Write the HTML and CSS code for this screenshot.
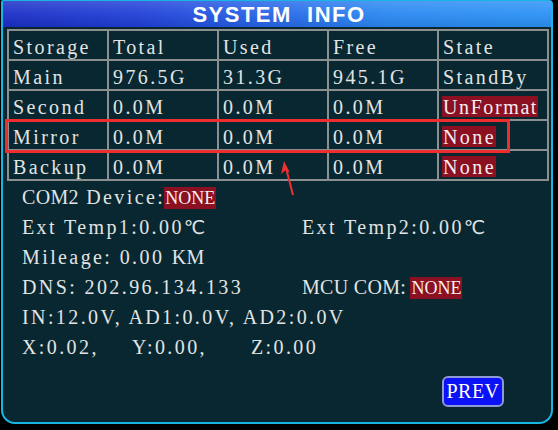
FILE: index.html
```html
<!DOCTYPE html>
<html>
<head>
<meta charset="utf-8">
<link rel="stylesheet" href="styles.css">
</head>
<body>
<div class="screen">
  <div class="title">SYSTEM&nbsp; INFO</div>
  <table class="grid">
    <tr><td>Storage</td><td>Total</td><td>Used</td><td>Free</td><td>State</td></tr>
    <tr><td>Main</td><td>976.5G</td><td>31.3G</td><td>945.1G</td><td>StandBy</td></tr>
    <tr><td>Second</td><td>0.0M</td><td>0.0M</td><td>0.0M</td><td><span class="tag wide">UnFormat</span></td></tr>
    <tr><td>Mirror</td><td>0.0M</td><td>0.0M</td><td>0.0M</td><td><span class="tag">None</span></td></tr>
    <tr><td>Backup</td><td>0.0M</td><td>0.0M</td><td>0.0M</td><td><span class="tag">None</span></td></tr>
  </table>
  <div class="info">
    <div class="line full"><span class="cap">COM2</span> Device:<span class="tag cap">NONE</span></div>
    <div class="line"><span>Ext Temp1:0.00<span class="deg">℃</span></span><span>Ext Temp2:0.00<span class="deg">℃</span></span></div>
    <div class="line full">Mileage: 0.00 <span class="cap">KM</span></div>
    <div class="line"><span>DNS: 202.96.134.133</span><span><span class="cap">MCU COM: </span><span class="tag cap">NONE</span></span></div>
    <div class="line full">IN:12.0V, AD1:0.0V, AD2:0.0V</div>
    <div class="line xyz"><span>X:0.02,</span><span>Y:0.00,</span><span>Z:0.00</span></div>
  </div>
  <div class="footer"><span class="btn">PREV</span></div>
  <div class="mark"></div>
  <svg class="arrow" width="30" height="40" viewBox="0 0 30 40">
    <path d="M18 35 L11 8" stroke="#f03030" stroke-width="2" fill="none"/>
    <path d="M9 1 L15 13 L11 10 L6 14 Z" fill="#f03030"/>
  </svg>
</div>
</body>
</html>
```
FILE: styles.css
```css
html, body {
  margin: 0;
  padding: 0;
  background: #000;
}
body {
  width: 558px;
  height: 430px;
  overflow: hidden;
}
.screen {
  position: relative;
  box-sizing: border-box;
  margin-left: 1px;
  width: 552px;
  height: 424px;
  border: 2px solid #17b6e2;
  border-top-width: 1px;
  border-radius: 2px 4px 14px 14px;
  background: #082730;
  font-family: "Liberation Serif", "Times New Roman", serif;
  font-variant-numeric: tabular-nums;
  letter-spacing: 2.4px;
  color: #e2e4e4;
}
.title {
  height: 26px;
  background:
    linear-gradient(to bottom, rgba(255,255,255,0.16) 0%, rgba(255,255,255,0.06) 45%, rgba(0,0,0,0.08) 100%),
    linear-gradient(to right, #1a2ec6 0%, #2040d8 25%, #2560e6 45%, #2a88f2 70%, #2b92f6 100%);
  color: #fff;
  font-family: "Liberation Sans", Arial, sans-serif;
  font-weight: bold;
  font-size: 22px;
  letter-spacing: 1.5px;
  line-height: 27px;
  text-align: center;
  padding-left: 4px;
}
.grid {
  margin: 2px 0 0 4px;
  border-collapse: separate;
  border-spacing: 0;
  table-layout: fixed;
  width: 542px;
  border-left: 2px solid #8b8f90;
  border-top: 2px solid #8b8f90;
}
.grid td {
  box-sizing: border-box;
  width: 110px;
  height: 30px;
  padding: 4px 0 0 4px;
  border-right: 2px solid #8b8f90;
  border-bottom: 2px solid #8b8f90;
  font-size: 20px;
  line-height: 24px;
  white-space: nowrap;
  overflow: hidden;
  vertical-align: middle;
}
.grid td:first-child {
  width: 100px;
}
.tag {
  display: inline-block;
  background: #8a1022;
  color: #f4eeee;
  line-height: 20px;
  padding: 1px 0 0 1px;
  margin-left: -1px;
}
.tag.wide {
  letter-spacing: 1.6px;
}
.cap {
  letter-spacing: 0.3px;
}
.tag.cap {
  font-size: 18px;
  letter-spacing: 0;
  padding: 1px 1px 0 1px;
  line-height: 21px;
}
.info {
  padding: 1px 0 0 19px;
  font-size: 20px;
}
.line {
  display: grid;
  grid-template-columns: 280px auto;
  height: 30px;
  line-height: 30px;
  white-space: pre;
}
.line.full {
  display: block;
}
.line.xyz {
  grid-template-columns: 110px 119px auto;
}
.deg {
  font-family: "DejaVu Sans", sans-serif;
  font-size: 19px;
  letter-spacing: 0;
}
.footer {
  display: flex;
  justify-content: flex-end;
  padding: 14px 47px 0 0;
}
.btn {
  box-sizing: border-box;
  width: 62px;
  height: 31px;
  background: #0b12f6;
  border: 2px solid #8e9ad6;
  border-radius: 6px;
  color: #fff;
  font-size: 20px;
  letter-spacing: 0.5px;
  line-height: 27px;
  text-align: center;
}
.mark {
  position: absolute;
  left: 2px;
  top: 118px;
  width: 505px;
  height: 34px;
  box-sizing: border-box;
  border: 3px solid #ee2e2e;
}
.arrow {
  position: absolute;
  left: 272px;
  top: 159px;
}
```
